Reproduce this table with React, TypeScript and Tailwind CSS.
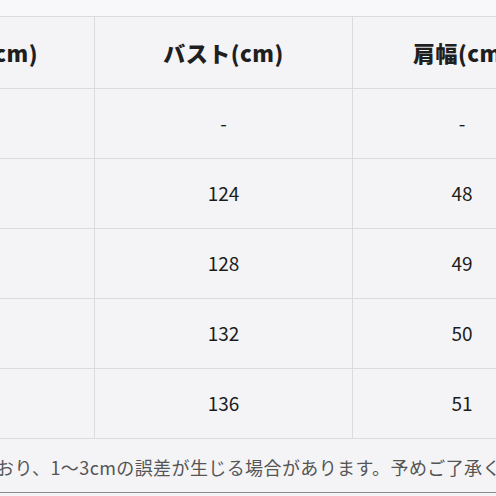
const headers = ['着丈(cm)', 'バスト(cm)', '肩幅(cm)'];

const rows = [
  ['', '-', '-'],
  ['', '124', '48'],
  ['', '128', '49'],
  ['', '132', '50'],
  ['', '136', '51'],
];

const cols = 'grid grid-cols-[211px_258px_218px]';

export default function App() {
  return (
    <div
      className="w-[496px] h-[496px] overflow-hidden bg-[#f4f4f6] text-[#1f1f1f]"
      style={{ fontFamily: '"Noto Sans CJK JP", "Noto Sans", sans-serif' }}
    >
      <div className="h-[16px] bg-[#f8f8fa]" />
      <div className="-ml-[116px] w-[687px] border-t border-[#dcdcdf]">
        {/* header */}
        <div className={`${cols} h-[72px] border-b border-[#dcdcdf]`}>
          {headers.map((h, i) => (
            <div
              key={h}
              className={`flex items-center justify-center text-[22px] font-black tracking-[0.5px] ${i < 2 ? 'border-r border-[#dcdcdf]' : ''}`}
            >
              {h}
            </div>
          ))}
        </div>
        {rows.map((r, ri) => (
          <div key={ri} className={`${cols} h-[70px] border-b border-[#dcdcdf]`}>
            {r.map((c, i) => (
              <div
                key={i}
                className={`flex items-center justify-center text-[19px] font-normal text-[#1c1c1c] ${i < 2 ? 'border-r border-[#dcdcdf]' : ''}`}
              >
                {c}
              </div>
            ))}
          </div>
        ))}
      </div>
      <div className="h-[54px] flex items-center overflow-hidden border-b border-[#8c8c8c]">
        <p className="whitespace-nowrap -ml-[4px] mt-[4px] text-[18px] tracking-[0.4px] text-[#555]">
          おり、1〜3cmの誤差が生じる場合があります。予めご了承ください。
        </p>
      </div>
    </div>
  );
}
